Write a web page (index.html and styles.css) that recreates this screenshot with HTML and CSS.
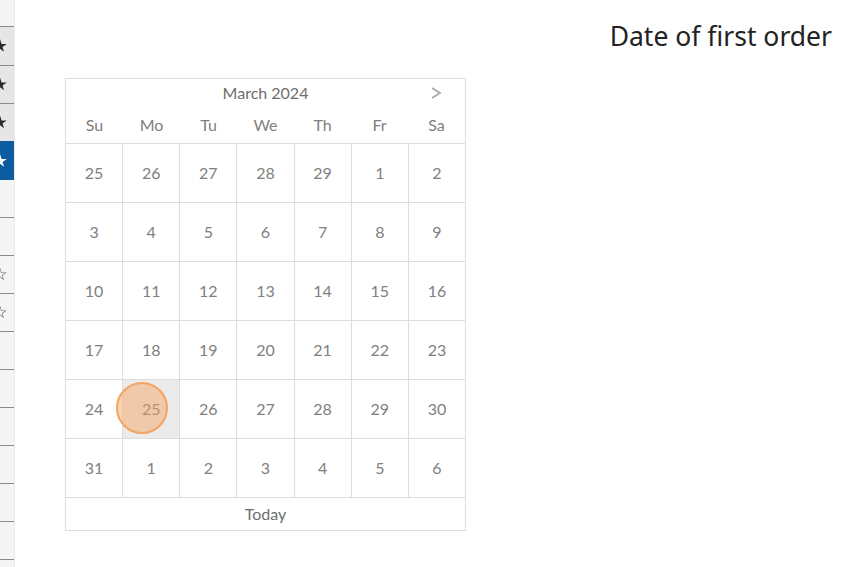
FILE: index.html
```html
<!DOCTYPE html>
<html lang="en">
<head>
    <meta charset="UTF-8">
    <meta name="viewport" content="width=device-width, initial-scale=1.0">
    <title>Date of first order</title>
    <link rel="stylesheet" href="styles.css">
</head>
<body>
    <div class="sidebar">
        <div class="row first dark"><span class="star solid"></span></div>
        <div class="row dark"><span class="star solid"></span></div>
        <div class="row dark"><span class="star solid"></span></div>
        <div class="row active"><span class="star white"></span></div>
        <div class="row plain"></div>
        <div class="row"></div>
        <div class="row"><span class="star outline"></span></div>
        <div class="row"><span class="star outline"></span></div>
        <div class="row"></div>
        <div class="row"></div>
        <div class="row"></div>
        <div class="row"></div>
        <div class="row"></div>
        <div class="row"></div>
        <div class="row"></div>
    </div>

    <div class="content">
        <div class="calendar">
            <div class="cal-head">
                <div class="month">
                    <span>March 2024</span>
                    <svg class="next" width="12" height="14" viewBox="0 0 12 14">
                        <path d="M2 2 L10 7 L2 12" fill="none" stroke="#a8a8a8" stroke-width="1.8"/>
                    </svg>
                </div>
                <div class="weekdays">
                    <span>Su</span><span>Mo</span><span>Tu</span><span>We</span><span>Th</span><span>Fr</span><span>Sa</span>
                </div>
            </div>
            <div class="days">
                <div class="day">25</div><div class="day">26</div><div class="day">27</div><div class="day">28</div><div class="day">29</div><div class="day">1</div><div class="day">2</div>
                <div class="day">3</div><div class="day">4</div><div class="day">5</div><div class="day">6</div><div class="day">7</div><div class="day">8</div><div class="day">9</div>
                <div class="day">10</div><div class="day">11</div><div class="day">12</div><div class="day">13</div><div class="day">14</div><div class="day">15</div><div class="day">16</div>
                <div class="day">17</div><div class="day">18</div><div class="day">19</div><div class="day">20</div><div class="day">21</div><div class="day">22</div><div class="day">23</div>
                <div class="day">24</div><div class="day selected">25<span class="click"></span></div><div class="day">26</div><div class="day">27</div><div class="day">28</div><div class="day">29</div><div class="day">30</div>
                <div class="day">31</div><div class="day">1</div><div class="day">2</div><div class="day">3</div><div class="day">4</div><div class="day">5</div><div class="day">6</div>
            </div>
            <div class="today">Today</div>
        </div>

        <h1 class="title">Date of first order</h1>
    </div>
</body>
</html>
```

FILE: styles.css
```css
* { box-sizing: border-box; margin: 0; padding: 0; }
body {
    font-family: Lato, "Noto Sans", sans-serif; background-color: #ffffff; color: #6e6e6e;
    display: flex; height: 567px; overflow: hidden;
}

.sidebar {
    width: 15px; flex: none; background-color: #f5f5f5; border-right: 1px solid #ececec;
    padding-top: 26px; overflow: hidden;
}
.row { height: 38px; border-top: 1px solid #8a8a8a; position: relative; }
.row.first { height: 39px; }
.row.dark { background-color: #e6e6e6; }
.row.active { background-color: #0d5c9f; border-top-color: #0d5c9f; height: 39px; }
.row.plain { border-top: none; height: 37px; }
.star {
    position: absolute; left: -7px; top: 50%; margin-top: -7px; width: 14px; height: 14px;
    clip-path: polygon(50% 0%, 61% 35%, 98% 35%, 68% 57%, 79% 91%, 50% 70%, 21% 91%, 32% 57%, 2% 35%, 39% 35%);
}
.star.solid { background-color: #2a2a2a; }
.star.white { background-color: #ffffff; }
.star.outline { background-color: #707070; }
.star.outline::after {
    content: ""; position: absolute; inset: 2px; background-color: #f5f5f5;
    clip-path: polygon(50% 0%, 61% 35%, 98% 35%, 68% 57%, 79% 91%, 50% 70%, 21% 91%, 32% 57%, 2% 35%, 39% 35%);
}

.content { flex: 1; display: flex; justify-content: space-between; align-items: flex-start; }

.calendar {
    width: 401px; margin: 78px 0 0 50px; border: 1px solid #dddddd; background-color: #ffffff;
}
.cal-head { height: 64px; }
.month {
    height: 30px; display: flex; align-items: center; justify-content: center; position: relative;
    font-size: 16px; color: #6e6e6e; padding-bottom: 3px;
}
.next { position: absolute; right: 23px; top: 7px; }
.weekdays {
    height: 34px; display: grid; grid-template-columns: repeat(7, 1fr); align-items: center; padding-bottom: 4px;
}
.weekdays span { text-align: center; font-size: 16px; color: #808080; }

.days {
    display: grid; grid-template-columns: repeat(7, 1fr); gap: 1px; background-color: #dddddd;
    border-top: 1px solid #dddddd; border-bottom: 1px solid #dddddd;
}
.day {
    height: 58px; background-color: #ffffff; display: flex; align-items: center; justify-content: center;
    font-size: 16px; color: #808080; position: relative; padding-bottom: 2px;
}
.day.selected { background-color: #ebebeb; }
.click {
    position: absolute; left: -7px; top: 2px; width: 52px; height: 52px; border-radius: 50%;
    background-color: rgba(246, 160, 90, 0.45); border: 2px solid #f5a35e;
}

.today {
    height: 32px; display: flex; align-items: center; justify-content: center; font-size: 16px; color: #6e6e6e;
    padding-bottom: 2px;
}

.title {
    font-family: "Noto Sans", sans-serif; font-weight: normal; font-size: 26.5px; color: #222222;
    margin: 18px 28px 0 0;
}
```
